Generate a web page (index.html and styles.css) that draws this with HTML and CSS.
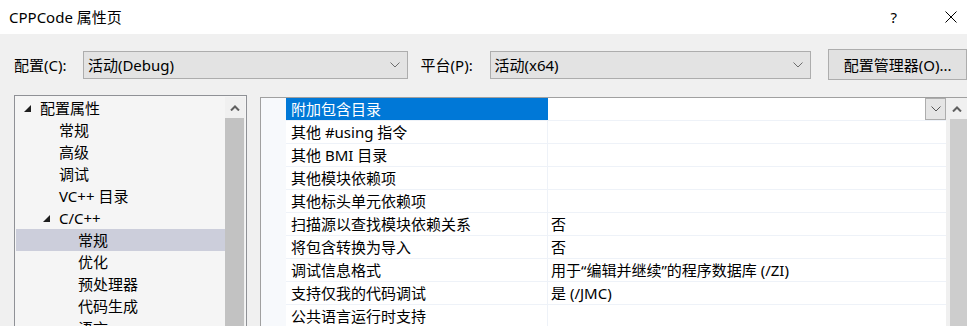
FILE: index.html
```html
<!DOCTYPE html>
<html lang="zh-CN">
<head>
<meta charset="utf-8">
<title>CPPCode 属性页</title>
<link rel="stylesheet" href="styles.css">
</head>
<body>
<div class="window">
  <div class="titlebar">
    <span class="title">CPPCode 属性页</span>
    <div class="tb-buttons">
      <span class="tb-help">?</span>
      <svg class="tb-close" width="12" height="12" viewBox="0 0 12 12"><path d="M0.5 0.5 L11.5 11.5 M11.5 0.5 L0.5 11.5" stroke="#000" stroke-width="1" fill="none"/></svg>
    </div>
  </div>
  <div class="content">
    <div class="config-row">
      <span class="cfg-label">配置(C):</span>
      <div class="combo combo-config">
        <span class="combo-text">活动(Debug)</span>
        <svg class="chev" width="10" height="6" viewBox="0 0 10 6"><path d="M0.5 0.5 L5 5 L9.5 0.5" stroke="#6d6d6d" stroke-width="1" fill="none"/></svg>
      </div>
      <span class="cfg-label plat-label">平台(P):</span>
      <div class="combo combo-platform">
        <span class="combo-text">活动(x64)</span>
        <svg class="chev" width="10" height="6" viewBox="0 0 10 6"><path d="M0.5 0.5 L5 5 L9.5 0.5" stroke="#6d6d6d" stroke-width="1" fill="none"/></svg>
      </div>
      <button class="btn-manager">配置管理器(O)...</button>
    </div>
    <div class="main">
      <div class="tree">
        <div class="tree-items">
          <div class="tree-row lvl0"><span class="tri"></span>配置属性</div>
          <div class="tree-row lvl1">常规</div>
          <div class="tree-row lvl1">高级</div>
          <div class="tree-row lvl1">调试</div>
          <div class="tree-row lvl1">VC++ 目录</div>
          <div class="tree-row lvl1b"><span class="tri"></span>C/C++</div>
          <div class="tree-row lvl2 selected">常规</div>
          <div class="tree-row lvl2">优化</div>
          <div class="tree-row lvl2">预处理器</div>
          <div class="tree-row lvl2">代码生成</div>
          <div class="tree-row lvl2">语言</div>
        </div>
        <div class="vscroll tree-scroll">
          <div class="sc-arrow"><svg width="10" height="6" viewBox="0 0 10 6"><path d="M1 5.5 L5 1.5 L9 5.5" stroke="#606060" stroke-width="2" fill="none"/></svg></div>
          <div class="sc-thumb"></div>
        </div>
      </div>
      <div class="grid-panel">
        <div class="margin-strip"></div>
        <div class="grid">
          <div class="grid-row active"><div class="cell-name">附加包含目录</div><div class="cell-value"><span class="dd-btn"><svg width="10" height="6" viewBox="0 0 10 6"><path d="M0.5 0.5 L5 5 L9.5 0.5" stroke="#555" stroke-width="1" fill="none"/></svg></span></div></div>
          <div class="grid-row"><div class="cell-name">其他 #using 指令</div><div class="cell-value"></div></div>
          <div class="grid-row"><div class="cell-name">其他 BMI 目录</div><div class="cell-value"></div></div>
          <div class="grid-row"><div class="cell-name">其他模块依赖项</div><div class="cell-value"></div></div>
          <div class="grid-row"><div class="cell-name">其他标头单元依赖项</div><div class="cell-value"></div></div>
          <div class="grid-row"><div class="cell-name">扫描源以查找模块依赖关系</div><div class="cell-value">否</div></div>
          <div class="grid-row"><div class="cell-name">将包含转换为导入</div><div class="cell-value">否</div></div>
          <div class="grid-row"><div class="cell-name">调试信息格式</div><div class="cell-value">用于“编辑并继续”的程序数据库 (/ZI)</div></div>
          <div class="grid-row"><div class="cell-name">支持仅我的代码调试</div><div class="cell-value">是 (/JMC)</div></div>
          <div class="grid-row"><div class="cell-name">公共语言运行时支持</div><div class="cell-value"></div></div>
        </div>
        <div class="vscroll grid-scroll">
          <div class="sc-arrow"><svg width="10" height="6" viewBox="0 0 10 6"><path d="M1 5.5 L5 1.5 L9 5.5" stroke="#606060" stroke-width="2" fill="none"/></svg></div>
          <div class="sc-thumb"></div>
        </div>
      </div>
    </div>
  </div>
</div>
</body>
</html>
```
FILE: styles.css
```css
* { box-sizing: border-box; }
html, body { margin: 0; padding: 0; }
body {
  width: 967px;
  height: 326px;
  overflow: hidden;
  font-family: "Noto Sans", "Noto Sans CJK SC", sans-serif;
  font-size: 15px;
  color: #000;
  background: #f0f0f0;
}
.window { width: 967px; height: 326px; overflow: hidden; }
.titlebar {
  height: 34px;
  background: #fff;
  display: flex;
  align-items: center;
  padding-left: 9px;
  padding-right: 10px;
}
.title { font-size: 15px; line-height: 20px; }
.tb-buttons { margin-left: auto; display: flex; align-items: center; }
.tb-help { font-size: 15px; line-height: 20px; margin-right: 48px; }
.tb-close { display: block; }

.content { height: 292px; padding-left: 14px; }
.config-row {
  display: flex;
  align-items: center;
  height: 31px;
  margin-top: 15px;
}
.cfg-label { width: 69px; line-height: 20px; }
.plat-label { margin-left: 13px; }
.combo {
  height: 28px;
  background: #e3e3e3;
  border: 1px solid #adadad;
  display: flex;
  align-items: center;
  padding-left: 4px;
  padding-right: 7px;
}
.combo-config { width: 325px; }
.combo-platform { width: 322px; }
.combo-text { line-height: 20px; }
.chev { margin-left: auto; display: block; }
.btn-manager {
  margin-left: 17px;
  width: 139px;
  height: 31px;
  background: #e1e1e1;
  border: 1px solid #adadad;
  font-family: inherit;
  font-size: 15px;
  color: #000;
  padding: 0;
}

.main { display: flex; margin-top: 15px; align-items: flex-start; }
.tree {
  width: 233px;
  height: 240px;
  border: 1px solid #8f9196;
  background: #f5f5f5;
  padding: 1px 1px 0 1px;
  display: flex;
}
.tree-items { width: 209px; }
.tree-row {
  height: 22px;
  line-height: 22px;
  display: flex;
  align-items: center;
  white-space: nowrap;
}
.tree-row.lvl0 { padding-left: 8px; }
.tree-row.lvl1 { padding-left: 43px; }
.tree-row.lvl1b { padding-left: 27px; }
.tree-row.lvl2 { padding-left: 62px; }
.tree-row.selected { background: #cccedb; }
.tri {
  width: 0;
  height: 0;
  border-left: 7px solid transparent;
  border-bottom: 7px solid #1e1e1e;
  margin-right: 9px;
  margin-top: 1px;
}

.vscroll { display: flex; flex-direction: column; background: #f0f0f0; }
.tree-scroll { width: 20px; }
.sc-arrow {
  height: 21px;
  display: flex;
  align-items: center;
  justify-content: center;
}
.sc-arrow svg { display: block; }
.tree-scroll .sc-thumb { flex: 1; background: #c2c2c2; margin-right: 1px; }

.grid-panel {
  margin-left: 13px;
  margin-top: 2px;
  flex: 1;
  height: 240px;
  border-top: 1px solid #a0a0a0;
  border-left: 1px solid #a0a0a0;
  display: flex;
  background: #fff;
}
.margin-strip { width: 25px; background: #f7f9fc; }
.grid { width: 660px; }
.grid-row {
  display: flex;
  height: 23px;
  border-bottom: 1px solid #eef2f8;
}
.cell-name {
  width: 262px;
  padding-left: 5px;
  line-height: 22px;
  border-right: 1px solid #eef2f8;
  white-space: nowrap;
}
.cell-value {
  flex: 1;
  padding-left: 3px;
  line-height: 22px;
  white-space: nowrap;
  display: flex;
  align-items: flex-start;
}
.grid-row.active .cell-name { background: #0078d7; color: #fff; border-right-color: #0078d7; }
.dd-btn {
  margin-left: auto;
  width: 21px;
  height: 22px;
  background: #e5e5e5;
  border: 1px solid #adadad;
  display: flex;
  align-items: center;
  justify-content: center;
}
.dd-btn svg { display: block; }
.grid-scroll { width: 21px; }
.grid-scroll .sc-thumb { flex: 1; background: #cdcdcd; margin-left: 4px; }
```
